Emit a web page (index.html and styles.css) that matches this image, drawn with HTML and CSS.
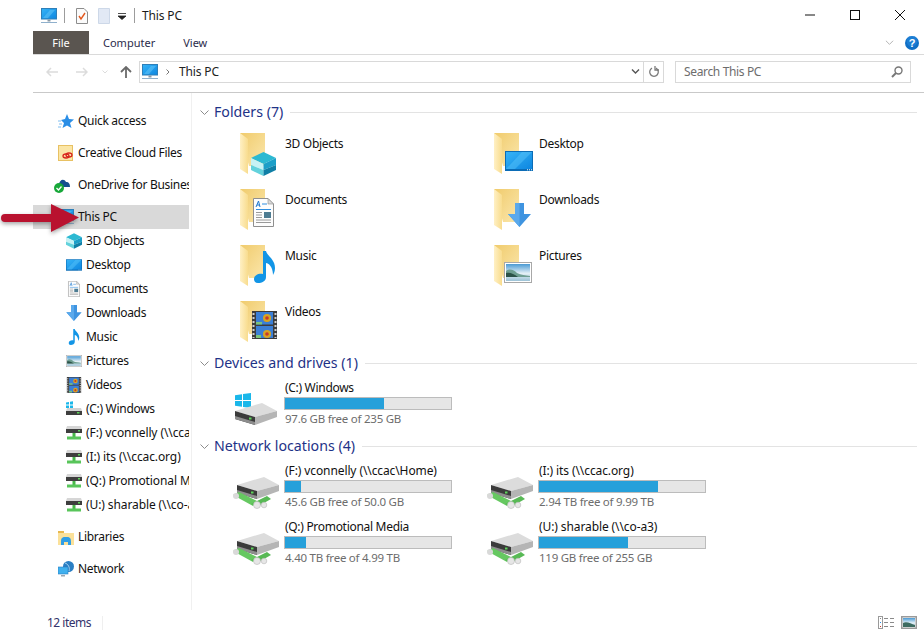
FILE: index.html
```html
<!DOCTYPE html>
<html lang="en">
<head>
<meta charset="utf-8">
<title>This PC</title>
<link rel="stylesheet" href="styles.css">
</head>
<body>
<svg class="sprite" xmlns="http://www.w3.org/2000/svg">
  <defs>
    <linearGradient id="g-folder" x1="0" y1="0" x2="1" y2="1"><stop offset="0" stop-color="#f0cb6c"/><stop offset="1" stop-color="#fbe7ad"/></linearGradient>
    <linearGradient id="g-flap" x1="0" y1="0" x2="1" y2="0"><stop offset="0" stop-color="#fff0c4"/><stop offset="1" stop-color="#f8dc8e"/></linearGradient>
    <linearGradient id="g-screen" x1="0" y1="0" x2="1" y2="1"><stop offset="0" stop-color="#36b4f7"/><stop offset="1" stop-color="#0d86e0"/></linearGradient>
    <linearGradient id="g-sky" x1="0" y1="0" x2="0" y2="1"><stop offset="0" stop-color="#4a9ad4"/><stop offset=".55" stop-color="#e4f0f6"/><stop offset="1" stop-color="#9cc2d6"/></linearGradient>
    <symbol id="s-folder" viewBox="0 0 25 41">
      <path d="M0 0H25V33H9Z" fill="url(#g-folder)"/>
      <path d="M0 0L8 6V41L0 36Z" fill="url(#g-flap)"/>
    </symbol>
    <symbol id="s-cube" viewBox="0 0 25 24">
      <path d="M12.500 0L25 6L12.500 12L0 6Z" fill="#2cb9d2"/>
      <path d="M0 6L12.500 12V18L0 13Z" fill="#c6f2f5"/>
      <path d="M0 13L12.500 18V24L0 18Z" fill="#63d2dc"/>
      <path d="M25 6L12.500 12V18L25 13Z" fill="#1c9fc8"/>
      <path d="M25 13L12.500 18V24L25 18Z" fill="#0f7fa6"/>
    </symbol>
    <symbol id="s-screen" viewBox="0 0 28 20">
      <rect width="28" height="20" fill="#0b6cb6"/>
      <rect x="1" y="1" width="26" height="17" fill="url(#g-screen)"/>
      <path d="M1 18L17 1H27L10 18Z" fill="#5cc5fa" opacity=".45"/>
      <path d="M22 18.800h1M24 18.800h1M26 18.800h1" stroke="#fff" stroke-width="1"/>
    </symbol>
    <symbol id="s-down" viewBox="0 0 23 24">
      <path d="M7 0H16V11H23L11.500 24L0 11H7Z" fill="#3f94e0"/>
      <path d="M7 0H11.500V24L0 11H7Z" fill="#5aa9ec"/>
    </symbol>
    <symbol id="s-pic" viewBox="0 0 28 21">
      <rect x=".5" y=".5" width="27" height="20" fill="#fff" stroke="#a8a8a8"/>
      <rect x="2" y="2" width="24" height="17" fill="url(#g-sky)"/>
      <path d="M2 9C6 6 10 8 13 11C17 13 21 13 26 14V15H2Z" fill="#6f9f92"/>
      <path d="M2 11C6 10 10 12 14 15H2Z" fill="#2c5348"/>
    </symbol>
    <symbol id="s-doc" viewBox="0 0 21 29">
      <path d="M.5 .5H15L20.500 6V28.500H.5Z" fill="#fdfdfd" stroke="#8f8f8f"/>
      <path d="M15 .5V6H20.500Z" fill="#d9d9d9" stroke="#8f8f8f" stroke-width=".6"/>
      <path d="M3 9L5.500 3L7 9M4 7H6.500" stroke="#1f78d0" fill="none" stroke-width="1"/>
      <path d="M9 6H14M3 11.500H18" stroke="#2f8ee0" stroke-width="1"/>
      <path d="M3 14.500H9M3 17H9M3 19.500H9M3 22H18M3 24.500H18" stroke="#9a9a9a" stroke-width="1"/>
      <rect x="11" y="14" width="7" height="6" fill="#4d7c92"/>
    </symbol>
    <symbol id="s-music" viewBox="0 0 21 32">
      <path d="M9 0H12C13 5 21 8 21 17C21 20 20 22 19 24C19 19 17 13 12 12V26C12 30 8 32 4 32C1 32 0 30 0 28C0 24 5 22 9 23Z" fill="#1295e6"/>
    </symbol>
    <symbol id="s-video" viewBox="0 0 25 28">
      <rect width="25" height="28" fill="#3c3c3c"/>
      <path d="M1.500 2v25M23.500 2v25" stroke="#cfcfcf" stroke-width="2" stroke-dasharray="2 2"/>
      <rect x="4" y="1" width="17" height="12.500" fill="#3b7fd6"/>
      <rect x="4" y="15" width="17" height="12" fill="#3b7fd6"/>
      <circle cx="15" cy="7" r="4" fill="#d9a420"/><circle cx="15" cy="7" r="1.800" fill="#c8392b"/>
      <circle cx="15" cy="23" r="4" fill="#d9a420"/><circle cx="15" cy="23" r="1.800" fill="#c8392b"/>
      <path d="M4 11H10V13.500H4ZM4 24H9V27H4Z" fill="#7cc47a"/>
    </symbol>
    <symbol id="s-disk" viewBox="0 0 42 22">
      <path d="M0 8L27 0L42 8L20 14Z" fill="#dcdcdc"/>
      <path d="M0 8L20 14V22L0 16Z" fill="#3b3b3b"/>
      <path d="M20 14L42 8V14L20 22Z" fill="#b5b5b5"/>
      <path d="M0 13L20 19V22L0 16Z" fill="#8d8d8d"/>
      <rect x="14" y="14.500" width="2.500" height="2" fill="#5dd35a"/>
    </symbol>
    <symbol id="s-win" viewBox="0 0 16 15">
      <path d="M0 2.300L7 1.200V7H0ZM8 1L16 0V7H8ZM0 8H7V13.800L0 12.800ZM8 8H16V15L8 14Z" fill="#1ab7ea"/>
    </symbol>
    <symbol id="s-netdisk" viewBox="0 0 46 32">
      <use href="#s-disk" x="4" y="0" width="42" height="22"/>
      <path d="M0 18L6 15L24 24L20 29Z" fill="#66c861"/>
      <path d="M18 27L34 19L38 22L24 30Z" fill="#58b955"/>
      <circle cx="3" cy="19" r="3" fill="#d9d9d9"/>
      <circle cx="24" cy="28" r="3.500" fill="#e6e6e6" stroke="#b8b8b8" stroke-width=".6"/>
      <circle cx="31" cy="28" r="2.800" fill="#e6e6e6" stroke="#b8b8b8" stroke-width=".6"/>
    </symbol>
    <symbol id="s-mini-net" viewBox="0 0 16 14">
      <path d="M1 0H15L16 3V7H0V3Z" fill="#d6d6d6"/>
      <rect y="3" width="16" height="4" fill="#3e3e3e"/>
      <rect x="12" y="4" width="2" height="1.500" fill="#5dd35a"/>
      <rect x="6.500" y="7" width="3" height="4" fill="#49b84a"/>
      <rect x="1" y="10.500" width="14" height="3" fill="#58c55a"/>
    </symbol>
    <symbol id="s-mini-drive" viewBox="0 0 16 16">
      <path d="M0 1.500L3 1V3.500H0ZM4 .8L7 .3V3.500H4ZM0 4.500H3V7H0ZM4 4.500H7V7.500L4 7Z" fill="#1ab7ea"/>
      <path d="M1 7H15L16 10V14H0V10Z" fill="#d2d2d2"/>
      <rect y="10" width="16" height="4" fill="#3e3e3e"/>
      <rect x="11" y="11" width="2.500" height="1.500" fill="#5dd35a"/>
    </symbol>
    <symbol id="s-pc" viewBox="0 0 16 16">
      <rect x=".5" y=".5" width="15" height="10.500" fill="url(#g-screen)" stroke="#2f7fb8"/>
      <path d="M2 10L9 2H14L7 10Z" fill="#71cffa" opacity=".45"/>
      <rect x="6.500" y="11.500" width="3" height="2" fill="#8b9aa6"/>
      <rect x="0" y="14" width="16" height="1" fill="#8fb0cc"/>
    </symbol>
  </defs>
</svg>

<div class="window">
  <header class="titlebar">
    <svg class="ico16" viewBox="0 0 16 16"><use href="#s-pc"/></svg>
    <span class="qa-sep"></span>
    <svg class="qa-page" viewBox="0 0 12 16"><path d="M.5 .5H8L11.500 4V15.500H.5Z" fill="#fbfbfb" stroke="#8c8c8c"/><path d="M3 8L5 11L9 5" fill="none" stroke="#e2581e" stroke-width="1.400"/></svg>
    <svg class="qa-page qa-blank" viewBox="0 0 12 16"><path d="M.5 .5H11.500V15.500H.5Z" fill="#e2e9f5" stroke="#cdd8e8"/></svg>
    <svg class="qa-drop" viewBox="0 0 8 8"><path d="M0 1.500H8M0 4H8L4 7.500Z" stroke="#222" fill="#222" stroke-width=".8"/></svg>
    <span class="qa-sep qa-sep-last"></span>
    <span class="title">This PC</span>
    <div class="winbtns">
      <button class="winbtn" aria-label="Minimize"><svg viewBox="0 0 10 10"><path d="M0 5H10" stroke="#111"/></svg></button>
      <button class="winbtn" aria-label="Maximize"><svg viewBox="0 0 10 10"><rect x=".5" y=".5" width="9" height="9" fill="none" stroke="#111"/></svg></button>
      <button class="winbtn" aria-label="Close"><svg viewBox="0 0 10 10"><path d="M0 0L10 10M10 0L0 10" stroke="#111"/></svg></button>
    </div>
  </header>

  <nav class="tabs">
    <span class="tab tab-file">File</span>
    <span class="tab tab-computer">Computer</span>
    <span class="tab tab-view">View</span>
    <svg class="ribbon-chev" viewBox="0 0 10 6"><path d="M1 .5L5 4.500L9 .5" fill="none" stroke="#b4b4b4" stroke-width="1.100"/></svg>
    <svg class="help" viewBox="0 0 14 14"><circle cx="7" cy="7" r="7" fill="#0f6fc6"/><circle cx="7" cy="5" r="5.500" fill="#2a8ce0" opacity=".5"/><text x="7" y="11" class="help-q">?</text></svg>
  </nav>

  <div class="addressrow">
    <svg class="navarrow" viewBox="0 0 12 10"><path d="M12 5H1M5 1L1 5L5 9" fill="none" stroke="#dcdcdc" stroke-width="1.500"/></svg>
    <svg class="navarrow nav-fwd" viewBox="0 0 12 10"><path d="M0 5H11M7 1L11 5L7 9" fill="none" stroke="#dcdcdc" stroke-width="1.500"/></svg>
    <svg class="navchev" viewBox="0 0 6 4"><path d="M.5 .5L3 3L5.500 .5" fill="none" stroke="#dcdcdc"/></svg>
    <svg class="navup" viewBox="0 0 12 12"><path d="M6 12V1M1 6L6 1L11 6" fill="none" stroke="#6a6a6a" stroke-width="1.800"/></svg>
    <div class="addrbox">
      <svg class="ico16" viewBox="0 0 16 16"><use href="#s-pc"/></svg>
      <svg class="crumb" viewBox="0 0 4 6"><path d="M.5 .5L3 3L.5 5.500" fill="none" stroke="#777"/></svg>
      <span class="addrtext">This PC</span>
      <svg class="addrdrop" viewBox="0 0 8 5"><path d="M.5 .5L4 4L7.500 .5" fill="none" stroke="#555" stroke-width="1.400"/></svg>
      <span class="addrdiv"></span>
      <svg class="refresh" viewBox="0 0 12 12"><path d="M4 2.200A4.300 4.300 0 1 0 8 2.200" fill="none" stroke="#7a7a7a" stroke-width="1.300"/><path d="M7 0V4H11" fill="none" stroke="#7a7a7a" stroke-width="1.300"/></svg>
    </div>
    <div class="searchbox">
      <span class="searchtext">Search This PC</span>
      <svg class="magnifier" viewBox="0 0 12 12"><circle cx="7.500" cy="4.500" r="3.500" fill="none" stroke="#777" stroke-width="1.400"/><path d="M5 7L1 11" stroke="#777" stroke-width="2"/></svg>
    </div>
  </div>

  <div class="main">
    <aside class="sidebar">
      <div class="navitem top"><svg class="ico16" viewBox="0 0 16 16"><path d="M9 1L11 6L16 6.500L12 10L13.500 15L9 12.500L4.500 15L6 10L3 7L7 6Z" fill="#2a8ee6"/><path d="M0 8H3M1 11H4M0 14H3" stroke="#7fbdf0"/></svg><span>Quick access</span></div>
      <div class="navitem top"><svg class="ico16" viewBox="0 0 16 16"><rect x=".5" y=".5" width="14" height="15" fill="#fbe6a6" stroke="#e8c163"/><ellipse cx="8" cy="11" rx="3" ry="2" fill="none" stroke="#d8261c" stroke-width="1.300"/><ellipse cx="11" cy="10" rx="3" ry="2" fill="none" stroke="#d8261c" stroke-width="1.300"/></svg><span>Creative Cloud Files</span></div>
      <div class="navitem top"><svg class="ico16 tall" viewBox="0 0 16 16"><path d="M5 8C5 3 10 1 12 5C15 5 16 7 16 10H8Z" fill="#14508f"/><circle cx="5" cy="11" r="5" fill="#18a83a"/><path d="M2.500 11L4.500 13L7.500 9.500" fill="none" stroke="#fff" stroke-width="1.300"/></svg><span>OneDrive for Business</span></div>
      <div class="navitem top selected"><svg class="ico16" viewBox="0 0 16 16"><use href="#s-pc"/></svg><span>This PC</span></div>
      <div class="navitem child"><svg class="ico16" viewBox="0 0 16 16"><use href="#s-cube"/></svg><span>3D Objects</span></div>
      <div class="navitem child"><svg class="ico16" viewBox="0 0 16 16"><use href="#s-screen"/></svg><span>Desktop</span></div>
      <div class="navitem child"><svg class="ico16" viewBox="0 0 16 16"><use href="#s-doc"/></svg><span>Documents</span></div>
      <div class="navitem child"><svg class="ico16" viewBox="0 0 16 16"><use href="#s-down"/></svg><span>Downloads</span></div>
      <div class="navitem child"><svg class="ico16" viewBox="0 0 16 16"><use href="#s-music"/></svg><span>Music</span></div>
      <div class="navitem child"><svg class="ico16" viewBox="0 0 16 16"><use href="#s-pic"/></svg><span>Pictures</span></div>
      <div class="navitem child"><svg class="ico16" viewBox="0 0 16 16"><use href="#s-video"/></svg><span>Videos</span></div>
      <div class="navitem child"><svg class="ico16" viewBox="0 0 16 16"><use href="#s-mini-drive"/></svg><span>(C:) Windows</span></div>
      <div class="navitem child"><svg class="ico16" viewBox="0 0 16 14"><use href="#s-mini-net"/></svg><span class="path">(F:) vconnelly (\\ccac\Home)</span></div>
      <div class="navitem child"><svg class="ico16" viewBox="0 0 16 14"><use href="#s-mini-net"/></svg><span class="path">(I:) its (\\ccac.org)</span></div>
      <div class="navitem child"><svg class="ico16" viewBox="0 0 16 14"><use href="#s-mini-net"/></svg><span class="path">(Q:) Promotional Media</span></div>
      <div class="navitem child"><svg class="ico16" viewBox="0 0 16 14"><use href="#s-mini-net"/></svg><span class="path">(U:) sharable (\\co-a3)</span></div>
      <div class="navitem top group"><svg class="ico16" viewBox="0 0 16 16"><path d="M0 2H6V4H16V16H0Z" fill="#fbe19a"/><path d="M0 2H6V4H0Z" fill="#e8b84e"/><path d="M3 13C3 8 5 8 8 8C11 8 13 8 13 13V16H10V13H6V16H3Z" fill="#2f9ee6"/></svg><span>Libraries</span></div>
      <div class="navitem top group"><svg class="ico16" viewBox="0 0 16 16"><circle cx="10.500" cy="5.500" r="5.500" fill="#2a7fc4"/><path d="M7 2C10 3 12 6 11 10" fill="none" stroke="#a9d5f2"/><rect x="0" y="6" width="10" height="7" fill="#3fb0ee" stroke="#2a7fc4" stroke-width=".6"/><rect x="3" y="14" width="4" height="1.500" fill="#9aa7b2"/></svg><span>Network</span></div>
    </aside>

    <main class="content">
      <section class="group-section">
        <h2 class="group-head"><svg class="group-chev" viewBox="0 0 9 5"><path d="M.5 .5L4.500 4.500L8.500 .5" fill="none" stroke="#8c8c8c"/></svg><span>Folders (7)</span><i class="group-rule"></i></h2>
        <div class="grid grid-folders">
          <div class="item"><svg class="bigicon" viewBox="0 0 53 48"><use href="#s-folder" x="8" y="3" width="25" height="41"/><use href="#s-cube" x="19" y="22" width="25" height="24"/></svg><span class="name">3D Objects</span></div>
          <div class="item"><svg class="bigicon" viewBox="0 0 53 48"><use href="#s-folder" x="8" y="3" width="25" height="41"/><use href="#s-screen" x="19" y="21" width="28" height="20"/></svg><span class="name">Desktop</span></div>
          <div class="item"><svg class="bigicon" viewBox="0 0 53 48"><use href="#s-folder" x="8" y="3" width="25" height="41"/><use href="#s-doc" x="21" y="12" width="21" height="29"/></svg><span class="name">Documents</span></div>
          <div class="item"><svg class="bigicon" viewBox="0 0 53 48"><use href="#s-folder" x="8" y="3" width="25" height="41"/><use href="#s-down" x="22" y="17" width="23" height="24"/></svg><span class="name">Downloads</span></div>
          <div class="item"><svg class="bigicon" viewBox="0 0 53 48"><use href="#s-folder" x="8" y="3" width="25" height="41"/><use href="#s-music" x="22" y="9" width="21" height="32"/></svg><span class="name">Music</span></div>
          <div class="item"><svg class="bigicon" viewBox="0 0 53 48"><use href="#s-folder" x="8" y="3" width="25" height="41"/><use href="#s-pic" x="18" y="20" width="28" height="21"/></svg><span class="name">Pictures</span></div>
          <div class="item"><svg class="bigicon" viewBox="0 0 53 48"><use href="#s-folder" x="8" y="3" width="25" height="41"/><use href="#s-video" x="20" y="13" width="25" height="28"/></svg><span class="name">Videos</span></div>
        </div>
      </section>

      <section class="group-section">
        <h2 class="group-head"><svg class="group-chev" viewBox="0 0 9 5"><path d="M.5 .5L4.500 4.500L8.500 .5" fill="none" stroke="#8c8c8c"/></svg><span>Devices and drives (1)</span><i class="group-rule"></i></h2>
        <div class="grid grid-drives">
          <div class="item drive"><svg class="bigicon driveicon" viewBox="0 0 53 48"><use href="#s-win" x="3" y="10" width="16" height="15"/><use href="#s-disk" x="3" y="20" width="42" height="22"/></svg><div class="drivetext"><span class="name">(C:) Windows</span><div class="bar"><div class="fill" style="width:99px"></div></div><span class="free">97.6 GB free of 235 GB</span></div></div>
        </div>
      </section>

      <section class="group-section">
        <h2 class="group-head"><svg class="group-chev" viewBox="0 0 9 5"><path d="M.5 .5L4.500 4.500L8.500 .5" fill="none" stroke="#8c8c8c"/></svg><span>Network locations (4)</span><i class="group-rule"></i></h2>
        <div class="grid grid-drives">
          <div class="item drive"><svg class="bigicon driveicon" viewBox="0 0 53 48"><use href="#s-netdisk" x="1" y="11" width="46" height="32"/></svg><div class="drivetext"><span class="name path">(F:) vconnelly (\\ccac\Home)</span><div class="bar"><div class="fill" style="width:16px"></div></div><span class="free">45.6 GB free of 50.0 GB</span></div></div>
          <div class="item drive"><svg class="bigicon driveicon" viewBox="0 0 53 48"><use href="#s-netdisk" x="1" y="11" width="46" height="32"/></svg><div class="drivetext"><span class="name path">(I:) its (\\ccac.org)</span><div class="bar"><div class="fill" style="width:119px"></div></div><span class="free">2.94 TB free of 9.99 TB</span></div></div>
          <div class="item drive"><svg class="bigicon driveicon" viewBox="0 0 53 48"><use href="#s-netdisk" x="1" y="11" width="46" height="32"/></svg><div class="drivetext"><span class="name">(Q:) Promotional Media</span><div class="bar"><div class="fill" style="width:21px"></div></div><span class="free">4.40 TB free of 4.99 TB</span></div></div>
          <div class="item drive"><svg class="bigicon driveicon" viewBox="0 0 53 48"><use href="#s-netdisk" x="1" y="11" width="46" height="32"/></svg><div class="drivetext"><span class="name path">(U:) sharable (\\co-a3)</span><div class="bar"><div class="fill" style="width:89px"></div></div><span class="free">119 GB free of 255 GB</span></div></div>
        </div>
      </section>
    </main>
  </div>

  <footer class="statusbar">
    <span class="count">12 items</span>
    <span class="status-sep"></span>
    <svg class="view-details" viewBox="0 0 17 13"><rect x=".5" y=".5" width="4" height="12" fill="#fff" stroke="#9a9a9a"/><path d="M2 2.500h1" stroke="#888"/><path d="M2 6.500h1" stroke="#2a8ee6"/><path d="M2 10.500h1" stroke="#c8392b"/><path d="M6 2.500h4M12 2.500h4M6 6.500h4M12 6.500h4M6 10.500h4M12 10.500h4" stroke="#8a8a8a"/></svg>
    <svg class="view-tiles" viewBox="0 0 16 13"><rect x=".75" y=".75" width="14.500" height="11.500" fill="#fff" stroke="#9a9a9a" stroke-width="1.500"/><rect x="2" y="2" width="12" height="9" fill="url(#g-sky)"/><path d="M2 7C6 5 10 8 14 9V11H2Z" fill="#3d6b60"/></svg>
  </footer>
</div>

<svg class="callout" viewBox="0 0 82 32" aria-hidden="true"><path d="M5 11H51V1L79 14.500L51 29V19H5A4 4 0 0 1 5 11Z" fill="#b9122f"/></svg>
</body>
</html>
```
FILE: styles.css
```css
* { box-sizing: border-box; }
html, body { margin: 0; height: 100%; }
body {
  width: 924px;
  height: 635px;
  overflow: hidden;
  background: #fff;
  position: relative;
  font-family: "Noto Sans", "Open Sans", sans-serif;
  font-size: 12px;
  line-height: 16px;
  color: #111;
}
.sprite { display: block; width: 0; height: 0; }

.window {
  margin-left: 33px;
  height: 635px;
  display: flex;
  flex-direction: column;
}

.ico16 { width: 16px; height: 16px; flex: none; display: block; }
.ico16.tall { margin-left: -4px; margin-right: 4px; }

/* title bar */
.titlebar {
  height: 31px;
  flex: none;
  display: flex;
  align-items: center;
  padding-left: 8px;
}
.qa-sep { width: 1px; height: 15px; background: #9c9c9c; margin: 0 11px 0 7px; }
.qa-sep-last { margin: 0 7px 0 8px; }
.qa-page { width: 12px; height: 16px; display: block; }
.qa-blank { margin-left: 10px; }
.qa-drop { width: 8px; height: 8px; margin-left: 8px; display: block; }
.title { color: #1a1a1a; letter-spacing: -.15px; }
.winbtns { margin-left: auto; padding-right: 2px; display: flex; align-self: stretch; }
.winbtn {
  width: 45px;
  height: 30px;
  border: 0;
  padding: 0;
  background: none;
  display: flex;
  align-items: center;
  justify-content: center;
}
.winbtn svg { width: 10px; height: 10px; display: block; }

/* ribbon tabs */
.tabs {
  height: 24px;
  flex: none;
  display: flex;
  align-items: center;
  border-bottom: 1px solid #dadada;
}
.tab { line-height: 23px; font-size: 11px; color: #2b2b4a; }
.tab-file {
  width: 56px;
  background: #5a5550;
  color: #fff;
  text-align: center;
}
.tab-computer { margin-left: 14px; }
.tab-view { margin-left: 28px; }
.ribbon-chev { width: 9px; height: 6px; margin-left: auto; display: block; }
.help { width: 14px; height: 14px; margin: 0 5px 0 11px; display: block; }
.help-q {
  fill: #fff;
  font-family: "Liberation Sans", sans-serif;
  font-size: 11px;
  font-weight: 700;
  text-anchor: middle;
}

/* address row */
.addressrow {
  height: 38px;
  flex: none;
  display: flex;
  align-items: center;
  padding: 0 13px 4px 13px;
  border-bottom: 1px solid #c9c9c9;
}
.navarrow { width: 12px; height: 10px; display: block; }
.nav-fwd { margin-left: 18px; }
.navchev { width: 6px; height: 4px; margin-left: 14px; display: block; }
.navup { width: 12px; height: 12px; margin-left: 12px; display: block; }
.addrbox {
  width: 525px;
  height: 22px;
  margin-left: 7px;
  border: 1px solid #d9d9d9;
  display: flex;
  align-items: center;
  padding-left: 2px;
}
.crumb { width: 4px; height: 6px; margin-left: 8px; display: block; }
.addrtext { margin-left: 9px; color: #222; letter-spacing: -.15px; }
.addrdrop { width: 9px; height: 5px; margin-left: auto; display: block; }
.addrdiv { width: 1px; height: 20px; background: #d9d9d9; margin: 0 4px 0 3px; }
.refresh { width: 12px; height: 12px; margin-right: 3px; display: block; }
.searchbox {
  width: 236px;
  height: 22px;
  margin-left: 11px;
  border: 1px solid #d9d9d9;
  display: flex;
  align-items: center;
  padding: 0 7px 0 8px;
}
.searchtext { color: #6d6d6d; letter-spacing: -.35px; }
.magnifier { width: 12px; height: 12px; margin-left: auto; display: block; }

/* body */
.main { flex: 1; min-height: 0; display: flex; }
.sidebar {
  width: 159px;
  flex: none;
  padding-top: 16px;
  border-right: 1px solid #f0f0f0;
}
.navitem {
  height: 24px;
  width: 156px;
  display: flex;
  align-items: center;
  gap: 4px;
  color: #111;
  white-space: nowrap;
  overflow: hidden;
  letter-spacing: -.3px;
}
.navitem .path { letter-spacing: -.1px; }
.navitem.top { padding-left: 25px; margin-bottom: 8px; }
.navitem.selected { background: #d9d9d9; margin-bottom: 0; }
.navitem.child { padding-left: 33px; }
.navitem.group { margin-top: 0; }
.navitem.child + .navitem.group { margin-top: 8px; }

.content { flex: 1; min-width: 0; padding-top: 7px; }
.group-head {
  height: 24px;
  margin: 0;
  padding: 0 7px 0 8px;
  display: flex;
  align-items: center;
  font-weight: 400;
  font-size: 14.2px;
  color: #1e3287;
}
.group-head span { position: relative; top: 0; }
.group-chev { width: 9px; height: 5px; margin-right: 5px; display: block; }
.group-rule { flex: 1; height: 1px; background: #e3e3e3; margin-left: 7px; }
.grid {
  display: grid;
  grid-template-columns: 254px 254px;
  padding-left: 40px;
}
.grid-folders { padding-top: 6px; row-gap: 4px; grid-auto-rows: 52px; margin-bottom: 1px; }
.grid-drives { grid-auto-rows: 56px; margin-bottom: 3px; }
.item { display: flex; align-items: flex-start; }
.bigicon { width: 53px; height: 48px; flex: none; display: block; }
.driveicon { margin-top: 8px; }
.name { padding-top: 6px; color: #111; white-space: nowrap; letter-spacing: -.3px; }
.name.path { letter-spacing: -.1px; }
.drivetext { display: flex; flex-direction: column; width: 168px; }
.drivetext .name { padding-top: 5px; }
.bar {
  height: 13px;
  width: 168px;
  margin-top: 1px;
  margin-left: -1px;
  background: #e6e6e6;
  border: 1px solid #bcbcbc;
}
.fill { height: 100%; background: #26a0da; }
.free { color: #6d6d6d; white-space: nowrap; margin-top: 1px; font-size: 11.5px; letter-spacing: -.25px; }

/* status bar */
.statusbar {
  height: 25px;
  flex: none;
  display: flex;
  align-items: center;
  padding: 0 7px 0 14px;
}
.count { color: #33336b; letter-spacing: -.5px; }
.status-sep { width: 1px; height: 14px; background: #efefef; margin-left: 11px; }
.view-details { width: 17px; height: 13px; margin-left: auto; display: block; }
.view-tiles { width: 16px; height: 13px; margin-left: 6px; display: block; }

/* red annotation arrow laid over the navigation pane */
.callout {
  position: absolute;
  left: 0;
  top: 203px;
  width: 82px;
  height: 32px;
  filter: drop-shadow(0 2px 2px rgba(0, 0, 0, .35));
}
```
